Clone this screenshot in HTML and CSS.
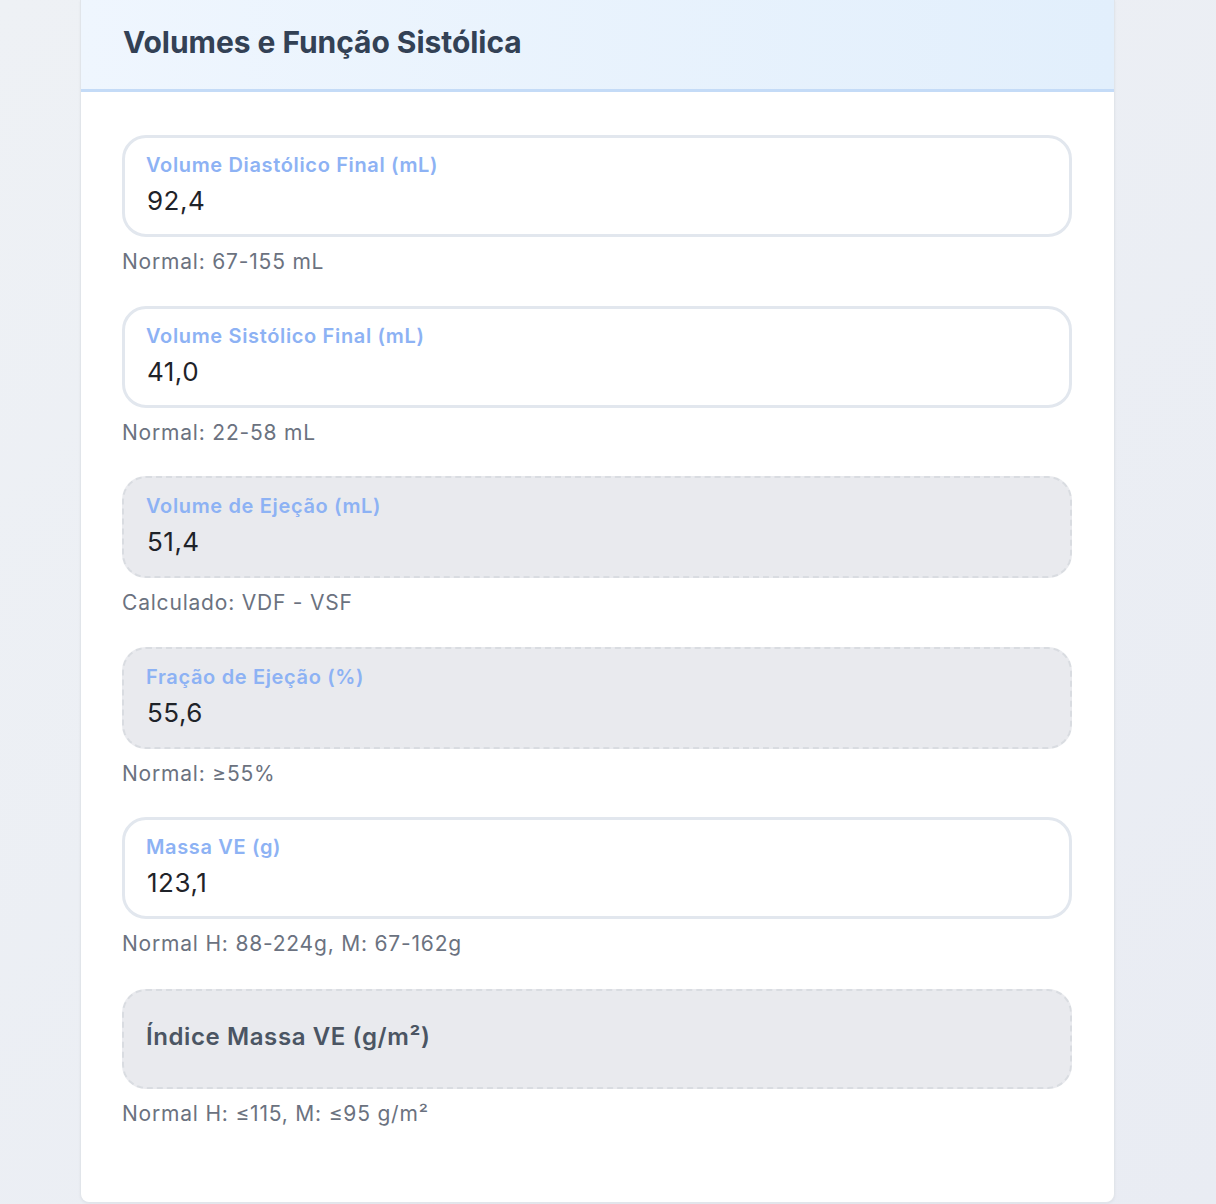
FILE: index.html
```html
<!DOCTYPE html>
<html lang="pt">
<head>
<meta charset="utf-8">
<title>Volumes e Função Sistólica</title>
<link rel="stylesheet" href="styles.css">
</head>
<body>
<section class="card">
  <header class="card-header">
    <h2 class="card-title">Volumes e Função Sistólica</h2>
  </header>
  <div class="card-body">
    <div class="field">
      <div class="box">
        <span class="label">Volume Diastólico Final (mL)</span>
        <span class="value">92,4</span>
      </div>
      <p class="hint">Normal: 67-155 mL</p>
    </div>
    <div class="field">
      <div class="box">
        <span class="label">Volume Sistólico Final (mL)</span>
        <span class="value">41,0</span>
      </div>
      <p class="hint">Normal: 22-58 mL</p>
    </div>
    <div class="field">
      <div class="box box-calc">
        <span class="label">Volume de Ejeção (mL)</span>
        <span class="value">51,4</span>
      </div>
      <p class="hint">Calculado: VDF - VSF</p>
    </div>
    <div class="field">
      <div class="box box-calc">
        <span class="label">Fração de Ejeção (%)</span>
        <span class="value">55,6</span>
      </div>
      <p class="hint">Normal: ≥55%</p>
    </div>
    <div class="field">
      <div class="box">
        <span class="label">Massa VE (g)</span>
        <span class="value">123,1</span>
      </div>
      <p class="hint">Normal H: 88-224g, M: 67-162g</p>
    </div>
    <div class="field">
      <div class="box box-calc box-empty">
        <span class="placeholder">Índice Massa VE (g/m²)</span>
      </div>
      <p class="hint">Normal H: ≤115, M: ≤95 g/m²</p>
    </div>
  </div>
</section>
</body>
</html>
```
FILE: styles.css
```css
* { box-sizing: border-box; }

html, body { height: 100%; }

body {
  margin: 0;
  font-family: Inter, "Noto Sans", "Liberation Sans", sans-serif;
  background: linear-gradient(135deg, #eef1f5 0%, #e9ecf3 100%);
  min-height: 1204px;
}

.card {
  margin-left: 80px;
  width: 1035px;
  background: #ffffff;
  border: 1px solid #e1e5ea;
  border-top: none;
  border-radius: 0 0 9px 9px;
  box-shadow: 0 1px 3px rgba(15, 23, 42, 0.05);
  overflow: hidden;
}

.card-header {
  height: 92px;
  padding-left: 42px;
  display: flex;
  align-items: center;
  background: linear-gradient(90deg, #eff6fe 0%, #e2effc 100%);
  border-bottom: 3px solid #c4dbf7;
}

.card-title {
  margin: 0;
  padding-bottom: 6px;
  font-size: 30px;
  font-weight: 700;
  color: #334155;
  letter-spacing: -0.05px;
}

.card-body {
  padding: 43px 42px 76px 41px;
  display: flex;
  flex-direction: column;
  gap: 31.5px;
}

.field {
  display: flex;
  flex-direction: column;
  gap: 12px;
}

.field:last-child {
  margin-top: 1px;
}

.box {
  height: 102px;
  border: 3px solid #e2e7ee;
  border-radius: 24px;
  padding: 15px 21px 17px;
  display: flex;
  flex-direction: column;
  gap: 8px;
  background: #ffffff;
}

.box-calc {
  border: 2px dashed #d9dce1;
  background: #e9eaee;
  padding: 16px 22px 18px;
}

.box-empty {
  justify-content: center;
  height: 100px;
  padding-top: 0;
  padding-bottom: 4px;
}

.label {
  font-size: 20px;
  line-height: 24px;
  font-weight: 600;
  color: #8db2f4;
  letter-spacing: 0.65px;
}

.value {
  font-size: 26px;
  line-height: 32px;
  color: #1f2329;
  padding-left: 1px;
  letter-spacing: 0.5px;
}

.placeholder {
  font-size: 24px;
  line-height: 30px;
  font-weight: 600;
  color: #4b5563;
  letter-spacing: 0.6px;
}

.hint {
  margin: 0;
  font-size: 21px;
  line-height: 25px;
  color: #6b7280;
  letter-spacing: 0.8px;
}
```
